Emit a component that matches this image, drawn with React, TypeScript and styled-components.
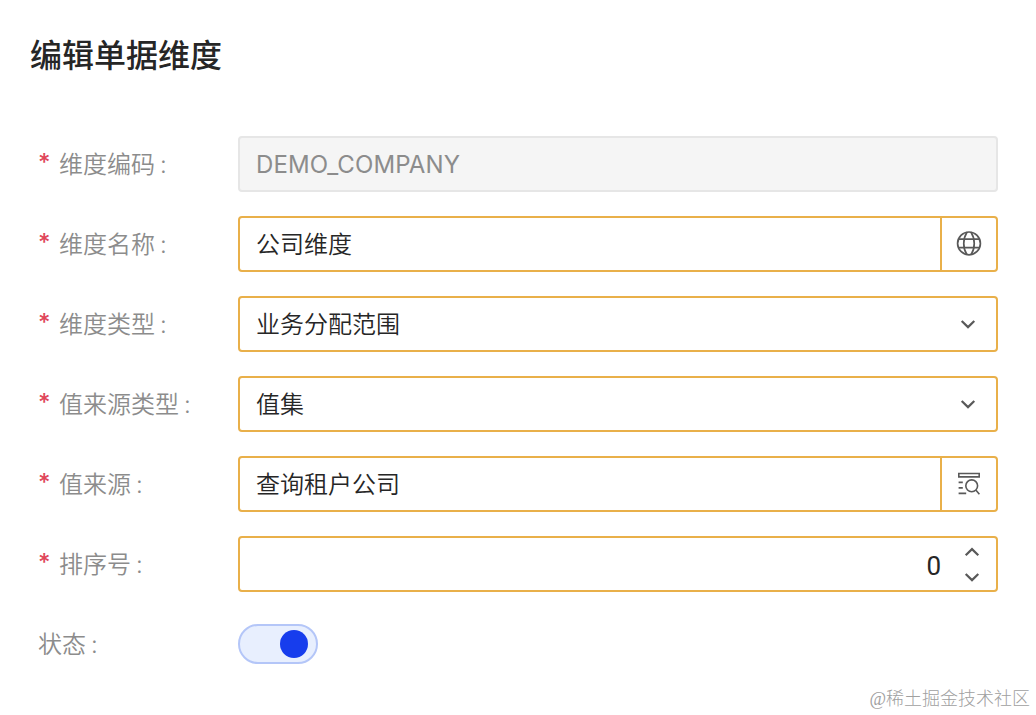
import React from 'react';
import styled, { createGlobalStyle } from 'styled-components';

type FieldProps = {
  label: string;
  required?: boolean;
  children: React.ReactNode;
}

const Field = ({ label, required, children }: FieldProps) => (
  <Row>
    <Label>
      {required && <Required>*</Required>}
      {label}
      <Colon>:</Colon>
    </Label>
    {children}
  </Row>
)

const GlobeIcon = () => (
  <Icon width="28" height="28" viewBox="0 0 28 28" strokeWidth="1.7">
    <circle cx="14" cy="13.4" r="11.4" />
    <path d="M11.9 2.2C7.7 9 7.7 17.8 11.9 24.6M16.1 2.2C20.3 9 20.3 17.8 16.1 24.6" />
    <path d="M3.4 9.2H24.6M3.4 17.7H24.6" />
  </Icon>
)

const LookupIcon = () => (
  <Icon width="28" height="28" viewBox="0 0 28 28" strokeWidth="1.6">
    <path d="M3.8 3.5H24.2V6.9H3.8Z" />
    <circle cx="16.7" cy="15.8" r="5.9" />
    <path d="M20.8 20L24.4 24.2M3.6 12.4H7.8M3.6 17.9H7.8M3.6 23.4H11.2" />
  </Icon>
)

const Chevron = ({ up }: { up?: boolean }) => (
  <Icon width="16" height="10" viewBox="0 0 16 10" strokeWidth="2.2">
    <path d={up ? 'M1.7 8.2L8 2.1L14.3 8.2' : 'M1.7 2L8 8.1L14.3 2'} />
  </Icon>
)

export default function App() {
  const [code] = React.useState('DEMO_COMPANY');
  const [enabled, setEnabled] = React.useState<boolean>(true);
  const [order, setOrder] = React.useState<number>(0);

  return (
    <Page>
      <GlobalStyle />
      <Title>编辑单据维度</Title>
      <Form>
        <Field label="维度编码" required>
          <Control disabled><CodeValue>{code}</CodeValue></Control>
        </Field>
        <Field label="维度名称" required>
          <Control>
            <Value>公司维度</Value>
            <Addon><GlobeIcon /></Addon>
          </Control>
        </Field>
        <Field label="维度类型" required>
          <Control>
            <Value>业务分配范围</Value>
            <Arrow><Chevron /></Arrow>
          </Control>
        </Field>
        <Field label="值来源类型" required>
          <Control>
            <Value>值集</Value>
            <Arrow><Chevron /></Arrow>
          </Control>
        </Field>
        <Field label="值来源" required>
          <Control>
            <Value>查询租户公司</Value>
            <Addon><LookupIcon /></Addon>
          </Control>
        </Field>
        <Field label="排序号" required>
          <Control>
            <NumberValue>{order}</NumberValue>
            <Stepper>
              <StepButton onClick={() => setOrder(order + 1)}><Chevron up /></StepButton>
              <StepButton onClick={() => setOrder(Math.max(0, order - 1))}><Chevron /></StepButton>
            </Stepper>
          </Control>
        </Field>
        <Field label="状态">
          <Switch on={enabled} onClick={() => setEnabled(!enabled)}>
            <Knob />
          </Switch>
        </Field>
      </Form>
      <Watermark>@稀土掘金技术社区</Watermark>
    </Page>
  )
}


const GlobalStyle = createGlobalStyle`
  * {
    box-sizing: border-box;
  }
  body {
    margin: 0;
    background: #fff;
  }
`;

const Page = styled.div`
  position: relative;
  width: 1036px;
  height: 715px;
  padding: 32px 38px 0 30px;
  overflow: hidden;
  font-family: Inter, 'Noto Sans CJK SC', sans-serif;
  color: #262626;
`;

const Title = styled.h1`
  margin: 0;
  font-size: 32px;
  font-weight: 500;
  line-height: 48px;
`;

const Form = styled.div`
  display: flex;
  flex-direction: column;
  gap: 24px;
  padding: 56px 0 0 8px;
`;

const Row = styled.div`
  display: grid;
  grid-template-columns: 200px 760px;
  align-items: center;
  height: 56px;
`;

const Label = styled.div`
  display: flex;
  align-items: center;
  padding-top: 2px;
  font-size: 24px;
  font-weight: 350;
  line-height: 36px;
  color: #8c8c8c;
`;

const Required = styled.span`
  width: 21px;
  padding-bottom: 4px;
  font-size: 24px;
  font-weight: 500;
  color: #e0475a;
`;

const Colon = styled.span`
  margin-left: 5px;
  font-weight: 350;
`;

const Control = styled.div<{ disabled?: boolean }>`
  display: flex;
  height: 56px;
  border: 2px solid ${props => props.disabled ? '#e6e6e6' : '#e9b04a'};
  border-radius: 4px;
  background: ${props => props.disabled ? '#f5f5f5' : '#fff'};
  color: ${props => props.disabled ? '#8c8c8c' : '#262626'};
`;

const Value = styled.div`
  flex: 1;
  padding: 1px 0 0 16px;
  font-size: 24px;
  font-weight: 350;
  line-height: 52px;
`;

const CodeValue = styled(Value)`
  font-weight: 400;
  letter-spacing: 0.1px;
`;

const NumberValue = styled(Value)`
  padding-top: 2px;
  font-family: Roboto, sans-serif;
  font-size: 26px;
  font-weight: 400;
  text-align: right;
`;

const Addon = styled.div`
  display: flex;
  align-items: center;
  justify-content: center;
  width: 56px;
  border-left: 2px solid #e9b04a;
`;

const Arrow = styled.div`
  display: flex;
  align-items: center;
  padding-right: 20px;
`;

const Stepper = styled.div`
  display: flex;
  flex-direction: column;
  align-items: center;
  justify-content: center;
  gap: 15px;
  width: 48px;
  margin-left: 7px;
`;

const StepButton = styled.button`
  display: flex;
  padding: 0;
  border: 0;
  background: none;
`;

const Icon = styled.svg`
  display: block;
  fill: none;
  stroke: #595959;
`;

const Switch = styled.button<{ on: boolean }>`
  display: flex;
  align-items: center;
  justify-content: ${props => props.on ? 'flex-end' : 'flex-start'};
  width: 80px;
  height: 40px;
  padding: 0 8px;
  border: 2px solid #b4c6f8;
  border-radius: 20px;
  background: #e8effe;
`;

const Knob = styled.span`
  width: 28px;
  height: 28px;
  border-radius: 50%;
  background: #173ded;
`;

const Watermark = styled.div`
  position: absolute;
  right: 6px;
  bottom: 3px;
  font-family: 'Liberation Serif', 'Noto Sans CJK SC', serif;
  font-size: 18px;
  font-weight: 300;
  line-height: 26px;
  color: #a0a0a0;
`;
